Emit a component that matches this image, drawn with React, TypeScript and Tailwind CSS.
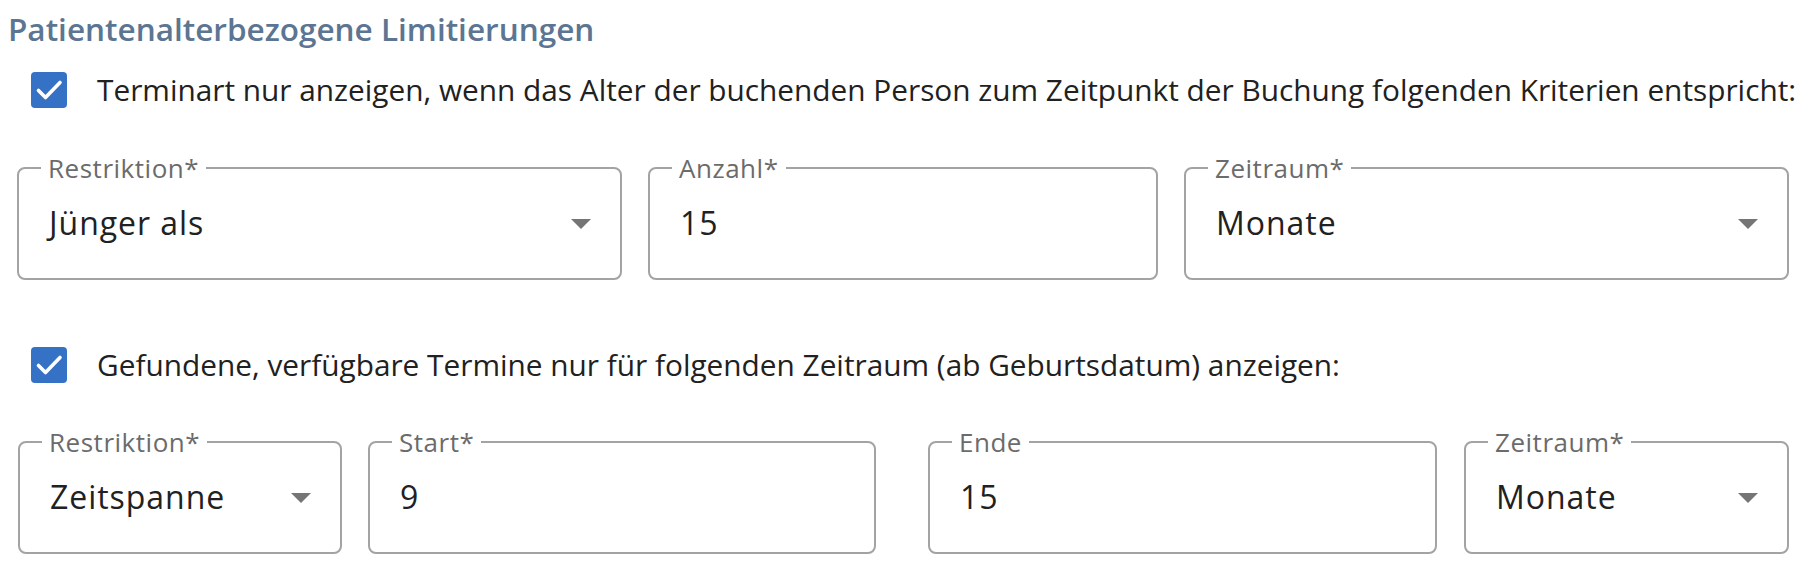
import React from "react";

const font = { fontFamily: '"Open Sans", "Noto Sans", sans-serif' };

function Check() {
  return (
    <div className="w-[36px] h-[36px] rounded-[4px] bg-[#3571c5] flex items-center justify-center shrink-0">
      <svg width="36" height="36" viewBox="0 0 36 36">
        <polyline points="7.5,18.5 14.5,25.5 29,10.5" fill="none" stroke="#ffffff" strokeWidth="3.6" strokeLinecap="round" strokeLinejoin="round" />
      </svg>
    </div>
  );
}

function Arrow() {
  return (
    <svg width="20" height="10" viewBox="0 0 20 10" className="shrink-0">
      <polygon points="0,0 20,0 10,10" fill="#757575" />
    </svg>
  );
}

function Field({ label, value, width, select }: { label: string; value: string; width: string; select?: boolean }) {
  return (
    <fieldset className={`${width} shrink-0 border-2 border-[#a3a3a3] rounded-[8px] pl-[22px] pr-[29px] py-0 m-0 min-w-0`}>
      <legend className="px-[7px] text-[26px] leading-[26px] text-[#6b6b6b] tracking-[0.02em]">{label}</legend>
      <div className="h-[97px] flex items-start justify-between">
        <div className="mt-[22px] pl-[8px] text-[32px] leading-[40px] text-[#212121] tracking-[0.03em]">{value}</div>
        {select && (
          <div className="mt-[38px]">
            <Arrow />
          </div>
        )}
      </div>
    </fieldset>
  );
}

export default function App() {
  return (
    <div className="w-[1816px] h-[570px] bg-white overflow-hidden" style={font}>
      <div className="pl-[8px] pt-[9px] text-[31.5px] leading-[40px] font-semibold text-[#5b7592]">
        Patientenalterbezogene Limitierungen
      </div>
      <div className="mt-[23px] pl-[31px] flex items-center">
        <Check />
        <div className="ml-[30px] text-[29.8px] leading-[36px] text-[#212121] whitespace-nowrap">
          Terminart nur anzeigen, wenn das Alter der buchenden Person zum Zeitpunkt der Buchung folgenden Kriterien entspricht:
        </div>
      </div>
      <div className="mt-[47px] pl-[17px] flex gap-[26px]">
        <Field label="Restriktion*" value="Jünger als" width="w-[605px]" select />
        <Field label="Anzahl*" value="15" width="w-[510px]" />
        <Field label="Zeitraum*" value="Monate" width="w-[605px]" select />
      </div>
      <div className="mt-[67px] pl-[31px] flex items-center">
        <Check />
        <div className="ml-[30px] text-[29.8px] leading-[36px] text-[#212121] whitespace-nowrap">
          Gefundene, verfügbare Termine nur für folgenden Zeitraum (ab Geburtsdatum) anzeigen:
        </div>
      </div>
      <div className="mt-[46px] pl-[18px] flex">
        <Field label="Restriktion*" value="Zeitspanne" width="w-[324px]" select />
        <div className="ml-[26px]">
          <Field label="Start*" value="9" width="w-[508px]" />
        </div>
        <div className="ml-[52px]">
          <Field label="Ende" value="15" width="w-[509px]" />
        </div>
        <div className="ml-[27px]">
          <Field label="Zeitraum*" value="Monate" width="w-[325px]" select />
        </div>
      </div>
    </div>
  );
}
